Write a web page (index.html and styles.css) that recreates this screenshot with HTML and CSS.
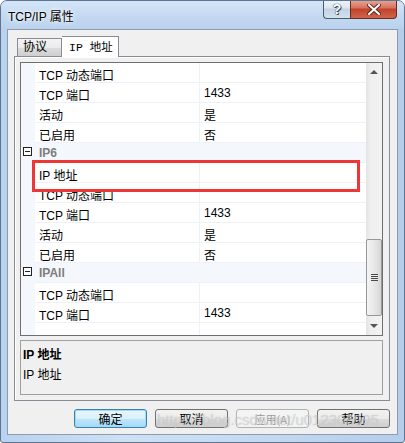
FILE: index.html
```html
<!DOCTYPE html>
<html lang="zh">
<head>
    <meta charset="UTF-8">
    <title>TCP/IP 属性</title>
    <link rel="stylesheet" href="styles.css">
</head>
<body>
    <div class="window">
        <div class="titlebar">
            <span class="title">TCP/IP 属性</span>
            <div class="caption-btns">
                <div class="cbtn help">?</div>
                <div class="cbtn close">
                    <svg width="14" height="11" viewBox="0 0 14 11"><path d="M2 1 L12 10 M12 1 L2 10" stroke="#5a2a22" stroke-width="4" stroke-linecap="square"/><path d="M2 1 L12 10 M12 1 L2 10" stroke="#fff" stroke-width="2" stroke-linecap="square"/></svg>
                </div>
            </div>
        </div>
        <div class="client">
            <div class="tabs">
                <div class="tab">协议</div>
                <div class="tab active">IP 地址</div>
            </div>
            <div class="panel">
                <div class="grid">
                    <div class="rows">
                        <div class="row"><div class="gutter"></div><div class="name">TCP 动态端口</div><div class="value"></div></div>
                        <div class="row"><div class="gutter"></div><div class="name">TCP 端口</div><div class="value">1433</div></div>
                        <div class="row"><div class="gutter"></div><div class="name">活动</div><div class="value">是</div></div>
                        <div class="row"><div class="gutter"></div><div class="name">已启用</div><div class="value">否</div></div>
                        <div class="row category"><div class="gutter"><span class="toggle"></span></div><div class="name">IP6</div></div>
                        <div class="row"><div class="gutter"></div><div class="name">IP 地址</div><div class="value"></div></div>
                        <div class="row"><div class="gutter"></div><div class="name">TCP 动态端口</div><div class="value"></div></div>
                        <div class="row"><div class="gutter"></div><div class="name">TCP 端口</div><div class="value">1433</div></div>
                        <div class="row"><div class="gutter"></div><div class="name">活动</div><div class="value">是</div></div>
                        <div class="row"><div class="gutter"></div><div class="name">已启用</div><div class="value">否</div></div>
                        <div class="row category"><div class="gutter"><span class="toggle"></span></div><div class="name">IPAll</div></div>
                        <div class="row"><div class="gutter"></div><div class="name">TCP 动态端口</div><div class="value"></div></div>
                        <div class="row"><div class="gutter"></div><div class="name">TCP 端口</div><div class="value">1433</div></div>
                        <div class="row"><div class="gutter"></div><div class="name"></div><div class="value"></div></div>
                    </div>
                    <div class="scrollbar">
                        <div class="arrow up"></div>
                        <div class="track">
                            <div class="thumb"><span class="grip"></span></div>
                        </div>
                        <div class="arrow down"></div>
                    </div>
                </div>
                <div class="desc">
                    <div class="desc-title">IP 地址</div>
                    <div class="desc-text">IP 地址</div>
                </div>
            </div>
            <div class="buttons">
                <button class="btn default">确定</button>
                <button class="btn">取消</button>
                <button class="btn disabled">应用(A)</button>
                <button class="btn">帮助</button>
            </div>
        </div>
        <div class="highlight"></div>
        <div class="watermark">https://blog.csdn.net/u012306995</div>
    </div>
</body>
</html>
```

FILE: styles.css
```css
body { margin: 0; background: #fff; font-family: "Liberation Sans", "Noto Sans CJK SC", sans-serif; font-size: 12px; color: #000; }
.window { position: relative; width: 405px; height: 443px; box-sizing: border-box; border: 1px solid #5d7591; border-radius: 7px 7px 3px 3px; background: linear-gradient(90deg, #b9d2ee 0%, #cde0f4 30%, #c6dbf2 60%, #b4cdea 100%); overflow: hidden; }
.titlebar { display: flex; align-items: flex-start; height: 28px; background: linear-gradient(180deg, #d4e5f7 0%, #c2d8f0 60%, #bad2ee 100%); }
.title { padding: 6px 0 0 7px; font-size: 12px; text-shadow: 0 0 6px #fff, 0 0 3px #fff; }
.caption-btns { display: flex; margin: -1px 7px 0 auto; }
.cbtn { height: 19px; box-sizing: border-box; display: flex; align-items: center; justify-content: center; border: 1px solid #4b5c72; border-top: none; }
.help { width: 27px; border-radius: 0 0 0 4px; background: linear-gradient(180deg, #f0f4f9 0%, #dbe5f0 45%, #c3d2e2 50%, #d4e1ee 100%); color: #fff; font-weight: bold; font-size: 14px; text-shadow: 0 0 1px #3d4d60, 0 0 1px #3d4d60, 1px 1px 0 #3d4d60; border-right: none; }
.close { width: 47px; border-radius: 0 0 4px 0; background: linear-gradient(180deg, #e8a898 0%, #d7705c 45%, #c2402a 50%, #d0654c 100%); border-color: #6b2b21; }

.client { width: 391px; height: 406px; margin-left: 6px; box-sizing: border-box; border: 1px solid #8c9bb0; background: #f0f0f0; padding: 6px 7px 0 6px; }
.tabs { display: flex; align-items: flex-end; height: 20px; margin-left: 3px; }
.tab { height: 18px; box-sizing: border-box; padding: 0 0 0 5px; border: 1px solid #898c95; border-bottom: none; background: linear-gradient(180deg, #f3f3f3 0%, #ebebeb 50%, #dddddd 51%, #cfcfcf 100%); font-size: 12px; line-height: 17px; white-space: nowrap; }
.tab.active { position: relative; z-index: 1; height: 21px; margin-bottom: -1px; width: 57px; border-left: none; background: #fff; padding: 2px 0 0 7px; font-family: "Liberation Mono", "Noto Sans CJK SC", monospace; font-size: 11.5px; }
.tab:first-child { width: 45px; border-right: 1px solid #898c95; }

.panel { width: 376px; height: 345px; box-sizing: border-box; border: 1px solid #898c95; box-shadow: inset 1px 1px 0 #fff; padding: 5px 0 0 5px; }
.grid { display: flex; width: 363px; height: 274px; box-sizing: border-box; border: 1px solid #6f6f6f; background: #fff; overflow: hidden; }
.rows { width: 345px; }
.row { display: flex; height: 20px; }
.gutter { width: 14px; flex: none; background: #f4f7fb; position: relative; }
.name, .value { height: 20px; box-sizing: border-box; border-bottom: 1px solid #eef1f5; padding: 3px 0 0 4px; white-space: nowrap; }
.name { width: 165px; border-right: 1px solid #eef1f5; }
.value { flex: 1; }
.category .name { flex: 1; border-right: none; background: #f4f7fb; font-weight: bold; color: #7d7d7d; }
.toggle { position: absolute; left: 2px; top: 4px; width: 9px; height: 9px; box-sizing: border-box; border: 1px solid #222; background: #fff; }
.toggle::after { content: ""; position: absolute; left: 1px; top: 3px; width: 5px; height: 1px; background: #222; }

.scrollbar { width: 16px; display: flex; flex-direction: column; background: linear-gradient(90deg, #e4e4e4 0%, #efefef 30%, #f2f2f2 100%); }
.arrow { height: 17px; position: relative; }
.arrow::after { content: ""; position: absolute; left: 4px; border-left: 4px solid transparent; border-right: 4px solid transparent; }
.arrow.up::after { top: 7px; border-bottom: 4px solid #555; }
.arrow.down::after { top: 6px; border-top: 4px solid #555; }
.track { flex: 1; display: flex; flex-direction: column; justify-content: flex-end; padding-bottom: 2px; }
.thumb { height: 77px; box-sizing: border-box; border: 1px solid #979797; border-radius: 2px; background: linear-gradient(90deg, #f4f4f4 0%, #e8e8e8 50%, #d6d6d6 100%); display: flex; align-items: center; justify-content: center; }
.grip { width: 7px; height: 7px; background: repeating-linear-gradient(180deg, #4a4a4a 0, #4a4a4a 1px, #e8e8e8 1px, #e8e8e8 2px); }

.desc { margin-top: 4px; width: 363px; height: 55px; box-sizing: border-box; border: 1px solid #a0a0a0; padding: 4px 0 0 2px; }
.desc-title { font-weight: bold; height: 20px; }
.desc-text { height: 20px; }

.buttons { display: flex; justify-content: flex-end; gap: 8px; margin-top: 8px; }
.btn { width: 73px; height: 19px; box-sizing: border-box; padding: 0; border: 1px solid #707070; border-radius: 3px; background: linear-gradient(180deg, #f2f2f2 0%, #ebebeb 50%, #dddddd 51%, #cfcfcf 100%); font-family: "Noto Sans CJK SC", sans-serif; font-size: 12px; line-height: 16px; color: #000; }
.btn.default { border-color: #3c7fb1; box-shadow: inset 0 0 0 1px #9edcf5; background: linear-gradient(180deg, #eaf6fd 0%, #d9f0fc 50%, #bee6fd 51%, #a7d9f5 100%); }
.btn.disabled { border-color: #adb2b5; background: #f4f4f4; color: #9a9a9a; font-size: 11px; }

.highlight { position: absolute; left: 31px; top: 159px; width: 328px; height: 32px; box-sizing: border-box; border: 3px solid #ef3636; }
.watermark { position: absolute; left: 156px; top: 410px; font-family: "Liberation Sans", sans-serif; font-size: 15px; color: rgba(225, 225, 225, 0.55); text-shadow: 0 0 1px rgba(140, 140, 140, 0.45); }
```
